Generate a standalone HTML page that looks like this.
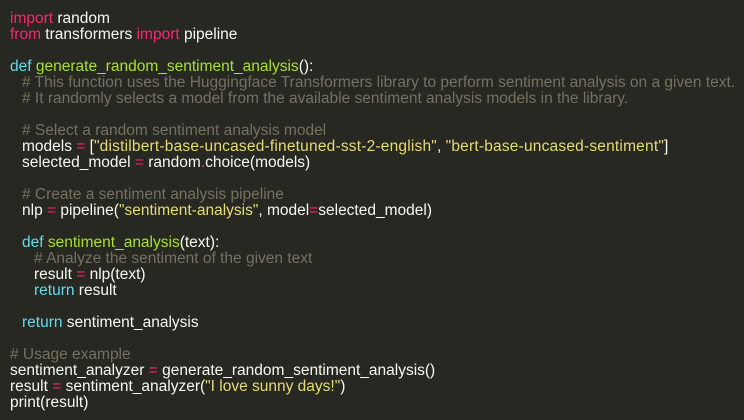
<!DOCTYPE html>
<html><head><meta charset="utf-8"><style>
html,body{margin:0;padding:0;background:#272822;width:744px;height:420px;overflow:hidden}
pre{margin:0;padding:11px 0 0 10px;font-family:"Liberation Sans",sans-serif;font-size:15.5px;line-height:16px;color:#f8f8f2;white-space:pre}
.k{color:#f92672}.d{color:#66d9ef}.f{color:#a6e22e}.c{color:#75715e}.s{color:#e6db74}
.i{padding-left:12px}.i2{padding-left:24px}
.w{letter-spacing:0.2px}
</style></head><body><pre><span class="k">import</span> random
<span class="k">from</span> transformers <span class="k">import</span> pipeline

<span class="d">def</span> <span class="f">generate_random_sentiment_analysis</span>():
<span class="i"></span><span class="c"># This function uses the Huggingface Transformers library to perform sentiment analysis on a given text.</span>
<span class="i"></span><span class="c"># It randomly selects a model from the available sentiment analysis models in the library.</span>

<span class="i"></span><span class="c"># Select a random sentiment analysis model</span>
<span class="i"></span>models <span class="k">=</span> [<span class="s w">"distilbert-base-uncased-finetuned-sst-2-english"</span>, <span class="s w">"bert-base-uncased-sentiment"</span>]
<span class="i"></span>selected_model <span class="k">=</span> random<span class="k">.</span>choice(models)

<span class="i"></span><span class="c"># Create a sentiment analysis pipeline</span>
<span class="i"></span>nlp <span class="k">=</span> pipeline(<span class="s">"sentiment-analysis"</span>, model<span class="k">=</span>selected_model)

<span class="i"></span><span class="d">def</span> <span class="f">sentiment_analysis</span>(text):
<span class="i2"></span><span class="c"># Analyze the sentiment of the given text</span>
<span class="i2"></span>result <span class="k">=</span> nlp(text)
<span class="i2"></span><span class="d">return</span> result

<span class="i"></span><span class="d">return</span> sentiment_analysis

<span class="c"># Usage example</span>
sentiment_analyzer <span class="k">=</span> generate_random_sentiment_analysis()
result <span class="k">=</span> sentiment_analyzer(<span class="s">"I love sunny days!"</span>)
print(result)
</pre></body></html>
